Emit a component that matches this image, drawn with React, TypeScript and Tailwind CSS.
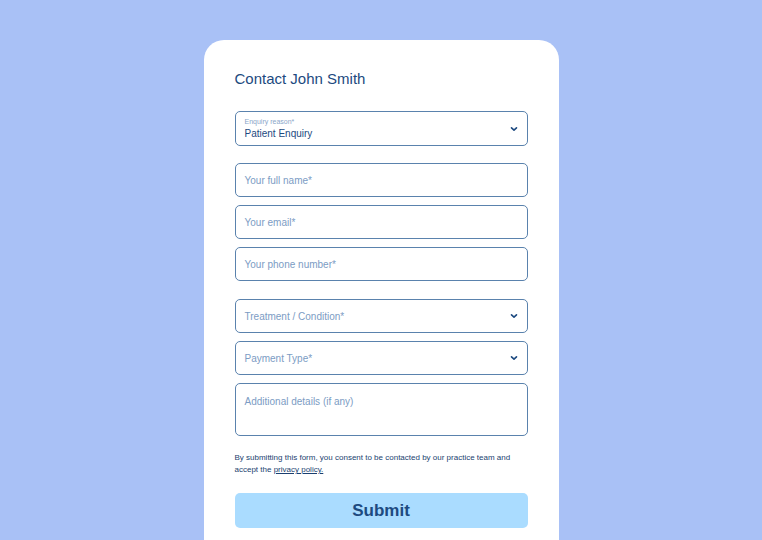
import React from "react";

const Chevron: React.FC = () => (
  <svg width="10" height="10" viewBox="0 0 10 10" fill="none" className="shrink-0">
    <path d="M2.5 3.8 L5 6.2 L7.5 3.8" stroke="#1d4a80" strokeWidth="1.6" strokeLinecap="round" strokeLinejoin="round" />
  </svg>
);

const Field: React.FC<{ placeholder: string; select?: boolean }> = ({ placeholder, select }) => (
  <div className="flex h-[34px] items-center justify-between rounded-[5px] border border-[#5a82ad] pl-[9px] pr-[8px]">
    <span className="pt-[2px] text-[10px] leading-[12px] text-[#7c9cc4]">{placeholder}</span>
    {select && <Chevron />}
  </div>
);

export default function App() {
  return (
    <div
      className="flex h-[540px] w-full justify-center overflow-hidden bg-[#a9c1f6] pt-[40px]"
      style={{ fontFamily: '"Liberation Sans", Arial, sans-serif' }}
    >
      <div className="h-[560px] w-[355px] rounded-[20px] bg-white px-[31px] pt-[30px]">
        <h1 className="text-[15px] leading-[18px] text-[#1d4a80]">Contact John Smith</h1>

        <div className="mt-[23px] flex h-[35px] items-center justify-between rounded-[5px] border border-[#5a82ad] pl-[9px] pr-[8px]">
          <div className="flex flex-col">
            <span className="text-[7px] leading-[9px] text-[#8aa6c9]">Enquiry reason*</span>
            <span className="mt-[2px] text-[10px] leading-[12px] text-[#1d4a80]">Patient Enquiry</span>
          </div>
          <Chevron />
        </div>

        <div className="mt-[17px] flex flex-col gap-[8px]">
          <Field placeholder="Your full name*" />
          <Field placeholder="Your email*" />
          <Field placeholder="Your phone number*" />
        </div>

        <div className="mt-[18px] flex flex-col gap-[8px]">
          <Field placeholder="Treatment / Condition*" select />
          <Field placeholder="Payment Type*" select />
          <div className="h-[53px] rounded-[5px] border border-[#5a82ad] px-[9px] pt-[12px]">
            <p className="text-[10px] leading-[12px] text-[#7c9cc4]">Additional details (if any)</p>
          </div>
        </div>

        <p className="mt-[16px] text-[8px] leading-[12px] text-[#1b3f70]">
          By submitting this form, you consent to be contacted by our practice team and accept the{" "}
          <span className="underline">privacy policy.</span>
        </p>

        <button className="mt-[17px] flex h-[35px] w-full items-center justify-center rounded-[5px] bg-[#aadcff] text-[17px] font-bold text-[#1d4a80]">
          Submit
        </button>
      </div>
    </div>
  );
}
